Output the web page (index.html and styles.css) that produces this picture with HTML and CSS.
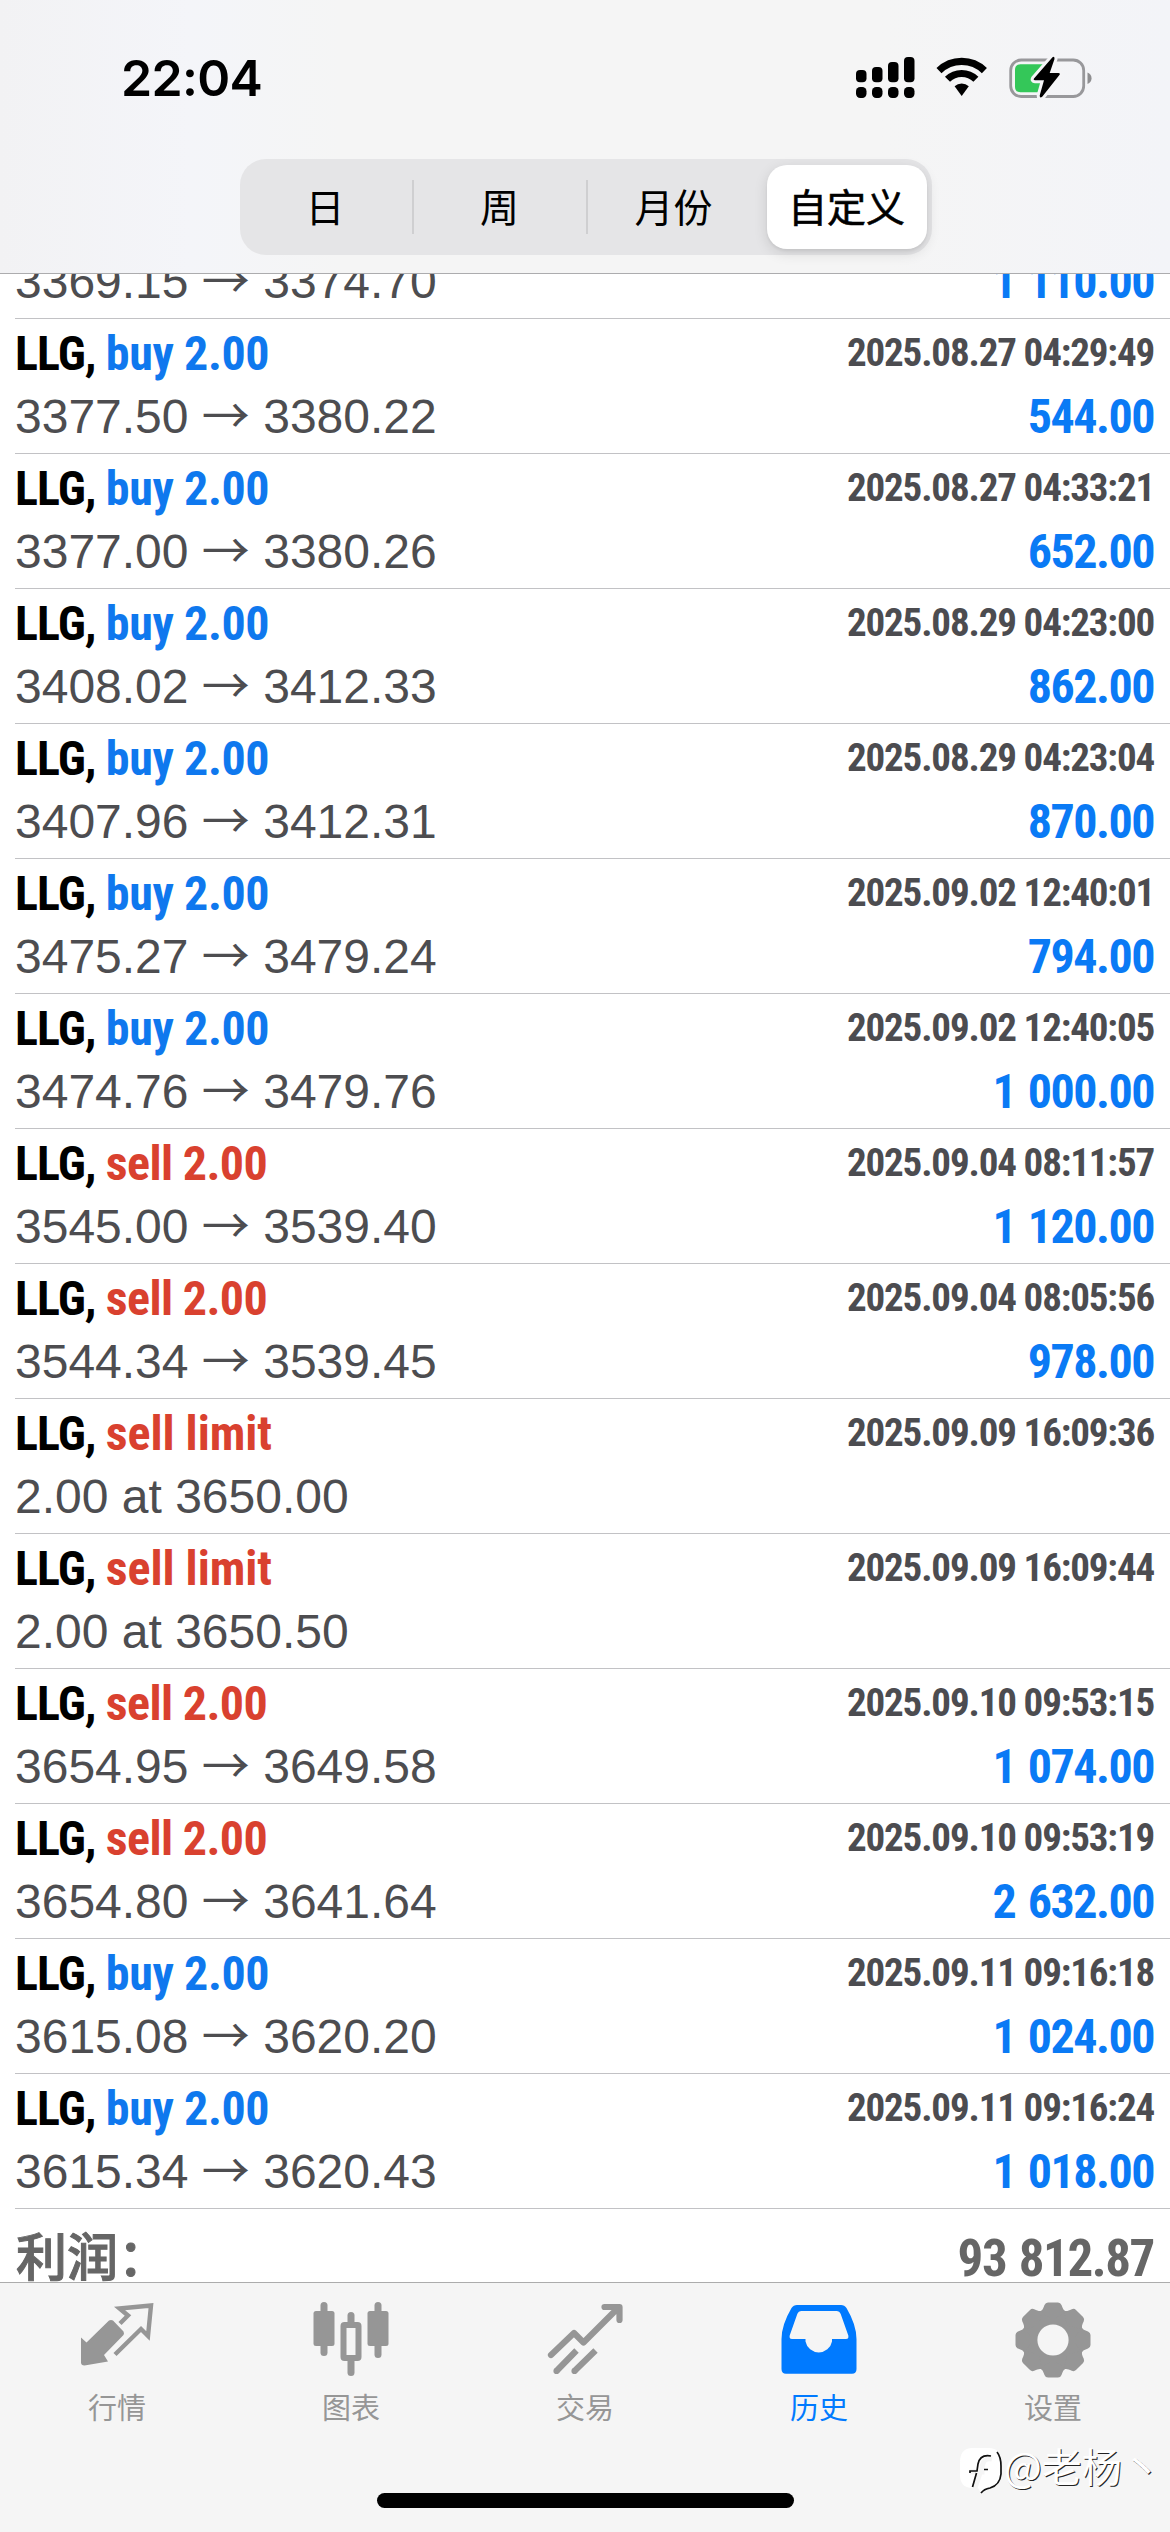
FILE: index.html
```html
<!DOCTYPE html>
<html lang="zh-CN">
<head>
<meta charset="utf-8">
<title>历史</title>
<link rel="stylesheet" href="styles.css">
</head>
<body>
<div class="screen">
  <header class="header">
    <div class="status">
      <span class="clock">22:04</span>
      <svg class="status-icons" width="236" height="44" viewBox="0 0 236 44">
        <g>
          <rect x="0" y="15" width="10.5" height="12.3" rx="4"/><rect x="16" y="12" width="10.5" height="15.3" rx="4"/>
          <rect x="32" y="7" width="10.5" height="20.3" rx="4"/><rect x="48" y="2" width="10.5" height="25.3" rx="4"/>
          <rect x="0" y="32" width="10.5" height="11" rx="4.2"/><rect x="16" y="32" width="10.5" height="11" rx="4.2"/>
          <rect x="32" y="32" width="10.5" height="11" rx="4.2"/><rect x="48" y="32" width="10.5" height="11" rx="4.2"/>
        </g>
        <g fill="none" stroke="#000" stroke-width="7.2">
          <path d="M83 15.6A32.5 32.5 0 0 1 128.400 15.6"/>
          <path d="M91.500 24.300A20.300 20.300 0 0 1 119.900 24.300"/>
        </g>
        <path d="M98.600 31.200A10.400 10.400 0 0 1 112.800 31.200L105.700 41Z"/>
        <rect x="154.700" y="5" width="73" height="36.500" rx="10.500" fill="none" stroke="#98989b" stroke-width="2.800"/>
        <path d="M231.500 17.500v11.500q4-1.500 4-5.750t-4-5.750z" fill="#8e8e90"/>
        <path d="M164.500 9.300h26v28h-26q-5.500 0-5.500-5.500v-17q0-5.500 5.500-5.500z" fill="#34c759"/>
        <path d="M196.500 2.200L178 23.500Q177 25.200 179 25.200H188L183.700 40.500Q183.700 43.500 186.200 41.700L203.600 19.800Q204.500 18 202.500 18H193.700L198.500 4Q198.700 1 196.500 2.200Z" stroke="#f5f5f7" stroke-width="6"/>
        <path d="M196.500 2.200L178 23.500Q177 25.200 179 25.200H188L183.700 40.500Q183.700 43.500 186.200 41.700L203.600 19.800Q204.500 18 202.500 18H193.700L198.500 4Q198.700 1 196.500 2.200Z"/>
      </svg>
    </div>
    <nav class="segments">
      <span class="segment first">日</span>
      <span class="segment">周</span>
      <span class="segment">月份</span>
      <span class="segment selected">自定义</span>
    </nav>
  </header>

  <main class="history">
    <section class="deal partial"><div class="line"><span class="price">3369.15 <i>→</i> 3374.70</span><span class="profit">1 110.00</span></div></section>
    <section class="deal"><div class="line"><b class="name">LLG, <span class="buy">buy 2.00</span></b><time class="date">2025.08.27 04:29:49</time></div><div class="line"><span class="price">3377.50 <i>→</i> 3380.22</span><span class="profit">544.00</span></div></section>
    <section class="deal"><div class="line"><b class="name">LLG, <span class="buy">buy 2.00</span></b><time class="date">2025.08.27 04:33:21</time></div><div class="line"><span class="price">3377.00 <i>→</i> 3380.26</span><span class="profit">652.00</span></div></section>
    <section class="deal"><div class="line"><b class="name">LLG, <span class="buy">buy 2.00</span></b><time class="date">2025.08.29 04:23:00</time></div><div class="line"><span class="price">3408.02 <i>→</i> 3412.33</span><span class="profit">862.00</span></div></section>
    <section class="deal"><div class="line"><b class="name">LLG, <span class="buy">buy 2.00</span></b><time class="date">2025.08.29 04:23:04</time></div><div class="line"><span class="price">3407.96 <i>→</i> 3412.31</span><span class="profit">870.00</span></div></section>
    <section class="deal"><div class="line"><b class="name">LLG, <span class="buy">buy 2.00</span></b><time class="date">2025.09.02 12:40:01</time></div><div class="line"><span class="price">3475.27 <i>→</i> 3479.24</span><span class="profit">794.00</span></div></section>
    <section class="deal"><div class="line"><b class="name">LLG, <span class="buy">buy 2.00</span></b><time class="date">2025.09.02 12:40:05</time></div><div class="line"><span class="price">3474.76 <i>→</i> 3479.76</span><span class="profit">1 000.00</span></div></section>
    <section class="deal"><div class="line"><b class="name">LLG, <span class="sell">sell 2.00</span></b><time class="date">2025.09.04 08:11:57</time></div><div class="line"><span class="price">3545.00 <i>→</i> 3539.40</span><span class="profit">1 120.00</span></div></section>
    <section class="deal"><div class="line"><b class="name">LLG, <span class="sell">sell 2.00</span></b><time class="date">2025.09.04 08:05:56</time></div><div class="line"><span class="price">3544.34 <i>→</i> 3539.45</span><span class="profit">978.00</span></div></section>
    <section class="deal"><div class="line"><b class="name">LLG, <span class="sell limit">sell limit</span></b><time class="date">2025.09.09 16:09:36</time></div><div class="line"><span class="price">2.00 at 3650.00</span></div></section>
    <section class="deal"><div class="line"><b class="name">LLG, <span class="sell limit">sell limit</span></b><time class="date">2025.09.09 16:09:44</time></div><div class="line"><span class="price">2.00 at 3650.50</span></div></section>
    <section class="deal"><div class="line"><b class="name">LLG, <span class="sell">sell 2.00</span></b><time class="date">2025.09.10 09:53:15</time></div><div class="line"><span class="price">3654.95 <i>→</i> 3649.58</span><span class="profit">1 074.00</span></div></section>
    <section class="deal"><div class="line"><b class="name">LLG, <span class="sell">sell 2.00</span></b><time class="date">2025.09.10 09:53:19</time></div><div class="line"><span class="price">3654.80 <i>→</i> 3641.64</span><span class="profit">2 632.00</span></div></section>
    <section class="deal"><div class="line"><b class="name">LLG, <span class="buy">buy 2.00</span></b><time class="date">2025.09.11 09:16:18</time></div><div class="line"><span class="price">3615.08 <i>→</i> 3620.20</span><span class="profit">1 024.00</span></div></section>
    <section class="deal"><div class="line"><b class="name">LLG, <span class="buy">buy 2.00</span></b><time class="date">2025.09.11 09:16:24</time></div><div class="line"><span class="price">3615.34 <i>→</i> 3620.43</span><span class="profit">1 018.00</span></div></section>
    <section class="total"><span class="total-label">利润：</span><span class="total-value">93 812.87</span></section>
  </main>

  <footer class="tabbar">
    <nav class="tabs">
      <a class="tab">
        <svg width="76" height="76" viewBox="0 0 76 76">
          <path fill="currentColor" d="M2 35.500L7.500 40.500L30 18.500Q32 17.500 34 18.500L44.500 29.500Q45.500 31.500 44.500 33L25 53L29 59.500L5.500 63.500Q2 63.500 2 60.500Z"/>
          <path fill="none" stroke="currentColor" stroke-width="4.400" d="M41 21.500L49 13.500L40.500 6.500L72 3.500L69 34L62 27L36 52.500" stroke-linejoin="miter"/>
        </svg>
        <span>行情</span>
      </a>
      <a class="tab">
        <svg width="76" height="76" viewBox="0 0 76 76">
          <g fill="currentColor"><rect x="0.500" y="9" width="21" height="35" rx="2.500"/><rect x="7.500" y="0" width="7" height="54" rx="3.500"/>
          <rect x="54.500" y="9" width="21" height="35" rx="2.500"/><rect x="61.500" y="0" width="7" height="56" rx="3.500"/>
          <rect x="34.500" y="10" width="7" height="14" rx="3.500"/><rect x="34.500" y="54" width="7" height="20" rx="3.500"/></g>
          <rect x="30.500" y="23" width="15" height="33" rx="1" fill="none" stroke="currentColor" stroke-width="6"/>
        </svg>
        <span>图表</span>
      </a>
      <a class="tab">
        <svg width="76" height="76" viewBox="0 0 76 76">
          <g fill="none" stroke="currentColor" stroke-width="6.200" stroke-linecap="round" stroke-linejoin="round">
            <path d="M4 53L27 31L36.500 40.500L71 6M57.500 5H72.500V18"/></g>
          <g stroke="currentColor" stroke-width="6.200"><path d="M9.500 69L29.500 48.500M27.500 69L48.500 48.500"/></g>
          <g fill="currentColor"><circle cx="9.500" cy="69" r="3.100"/><circle cx="27.500" cy="69" r="3.100"/></g>
        </svg>
        <span>交易</span>
      </a>
      <a class="tab active">
        <svg width="76" height="76" viewBox="0 0 76 76">
          <path fill="currentColor" fill-rule="evenodd" d="M16 3H60Q63.500 3 65.500 6Q75.500 23 75.500 37V67Q75.500 71.700 71 71.700H5Q0.500 71.700 0.500 67V37Q0.500 23 10.500 6Q12.500 3 16 3ZM20.500 9Q17.500 9 16.300 12L8.700 33.500Q8 37 11 37H24.500V39.500A13.500 13.500 0 0 0 51 39.500V37H65Q68 37 67.300 33.500L59.700 12Q58.500 9 55.500 9Z"/>
        </svg>
        <span>历史</span>
      </a>
      <a class="tab">
        <svg width="76" height="76" viewBox="-38 -38 76 76">
          <defs><path id="tooth" d="M-13-28.500C-10.500-29.500-9.800-31.500-8.500-35Q-7.500-37.500-5-37.500H5Q7.500-37.500 8.500-35C9.800-31.500 10.500-29.500 13-28.500L0-20Z"/></defs>
          <g fill="currentColor"><circle r="30.500"/>
          <use href="#tooth"/><use href="#tooth" transform="rotate(45)"/><use href="#tooth" transform="rotate(90)"/><use href="#tooth" transform="rotate(135)"/>
          <use href="#tooth" transform="rotate(180)"/><use href="#tooth" transform="rotate(225)"/><use href="#tooth" transform="rotate(270)"/><use href="#tooth" transform="rotate(315)"/></g>
          <circle r="15.600" fill="#f5f5f5"/>
        </svg>
        <span>设置</span>
      </a>
    </nav>
    <div class="home"></div>
    <div class="watermark">
      <svg width="46" height="50" viewBox="0 0 46 50">
        <path fill="#fff" d="M13 3H31Q43 3 43 17V28Q43 41 31 42Q26 43 23 48L20 43H13Q2 42 2 30V17Q2 4 13 3Z"/>
        <path fill="none" stroke="#f5f5f5" stroke-width="5" d="M34 14Q25 12 24 23V27H12M22 28L17 43"/>
        <path fill="none" stroke="#111" stroke-width="1.700" d="M33 11Q22 9 20 19L19 26H12V28M18.500 28L14.500 42M26 24.500H30M39 7Q43 12 43 21V29Q42 40 32 43Q26 44 23 48"/>
      </svg>
      <span>@老杨丶</span>
    </div>
  </footer>
</div>
</body>
</html>
```
FILE: styles.css
```css
* { box-sizing: border-box; }

body {
  margin: 0;
  background: #fff;
  font-family: "Liberation Sans", "Noto Sans CJK SC", sans-serif;
}

.screen {
  width: 1170px;
  height: 2532px;
  display: flex;
  flex-direction: column;
  overflow: hidden;
}

.header {
  height: 274px;
  flex: none;
  padding-top: 54px;
  display: flex;
  flex-direction: column;
  align-items: center;
  background: linear-gradient(90deg, #f2f2f4 0, #f4f5f9 190px, #f5f5f5 340px, #f5f5f5 880px, #f3f4f8 1170px);
  border-bottom: 1px solid #acacae;
}

.status {
  width: 100%;
  height: 105px;
  padding: 0 78px 0 121px;
  display: flex;
  justify-content: space-between;
  align-items: flex-start;
}

.clock {
  font: 600 50px/49px Inter, sans-serif;
  letter-spacing: -0.7px;
}

.status-icons { margin-top: 1px; }

.segments {
  width: 692px;
  height: 96px;
  margin-left: 1px;
  padding: 6px 5px 6px 6px;
  display: grid;
  grid-template-columns: 166px 174px 174px 1fr;
  align-items: center;
  background: #e5e5e7;
  border-radius: 26px;
  font: 400 39px/54px "Noto Sans CJK SC", sans-serif;
  text-align: center;
}

.segment {
  height: 54px;
  line-height: 50px;
}

.first { padding-right: 7px; }

.segment + .segment { border-left: 2px solid #cfcfd1; }

.segments .selected {
  height: 84px;
  margin-left: 7px;
  line-height: 80px;
  border: 0;
  border-radius: 20px;
  background: #fff;
  -webkit-text-stroke: 0.6px #000;
  box-shadow: 0 4px 14px rgba(0, 0, 0, 0.12), 0 2px 3px rgba(0, 0, 0, 0.06);
}

.history {
  height: 2008px;
  flex: none;
  padding-left: 15px;
  overflow: hidden;
}

.deal {
  height: 135px;
  padding: 4px 16px 0 0;
  border-top: 1px solid #c2c2c5;
}

.partial {
  height: 44px;
  padding-bottom: 6px;
  border: 0;
  display: flex;
  flex-direction: column;
  justify-content: flex-end;
}

.line {
  display: flex;
  justify-content: space-between;
}

.line + .line { margin-top: 2px; }

.name {
  font: 700 48px/62px "Roboto Condensed", sans-serif;
  letter-spacing: -0.9px;
  color: #000;
}

.buy { color: #0f78ee; letter-spacing: -0.4px; }
.sell { color: #d9412f; letter-spacing: -0.6px; }
.limit { letter-spacing: -0.05px; }

.date {
  font: 700 39px/60px "Roboto Condensed", sans-serif;
  letter-spacing: -1.15px;
  color: #4c4c50;
}

.price {
  font-size: 48px;
  line-height: 60px;
  color: #4d4d50;
}

.price i {
  font: 400 48px/1px "Noto Sans CJK SC", sans-serif;
}

.profit {
  font: 700 48px/60px "Roboto Condensed", sans-serif;
  letter-spacing: -1.5px;
  word-spacing: 3px;
  color: #0a7af5;
}

.total {
  height: 74px;
  padding: 15px 16px 0 1px;
  display: flex;
  justify-content: space-between;
  align-items: baseline;
  border-top: 1px solid #c2c2c5;
  color: #666;
}

.total-label {
  font: 500 51px/60px "Noto Sans CJK SC", sans-serif;
  -webkit-text-stroke: 1px #666;
}

.total-value {
  font: 700 51px/60px "Roboto Condensed", sans-serif;
  letter-spacing: -1.4px;
  word-spacing: 2px;
}

.tabbar {
  flex: 1;
  position: relative;
  display: flex;
  flex-direction: column;
  align-items: center;
  background: #f5f5f5;
  border-top: 1px solid #acacac;
}

.tabs {
  width: 100%;
  height: 210px;
  padding-top: 19px;
  display: grid;
  grid-template-columns: repeat(5, 1fr);
}

.tab {
  display: flex;
  flex-direction: column;
  align-items: center;
  gap: 8px;
  color: #969696;
  font: 400 29px/40px "Noto Sans CJK SC", sans-serif;
}

.active { color: #007aff; }

.home {
  width: 417px;
  height: 15px;
  border-radius: 8px;
  background: #000;
}

.watermark {
  position: absolute;
  left: 958px;
  top: 162px;
  display: flex;
  align-items: flex-start;
  color: #fff;
  font: 400 40px/36px "Noto Sans CJK SC", sans-serif;
  text-shadow: 1px 1px 0 #222;
}

.watermark span { padding-top: 2px; }
```
